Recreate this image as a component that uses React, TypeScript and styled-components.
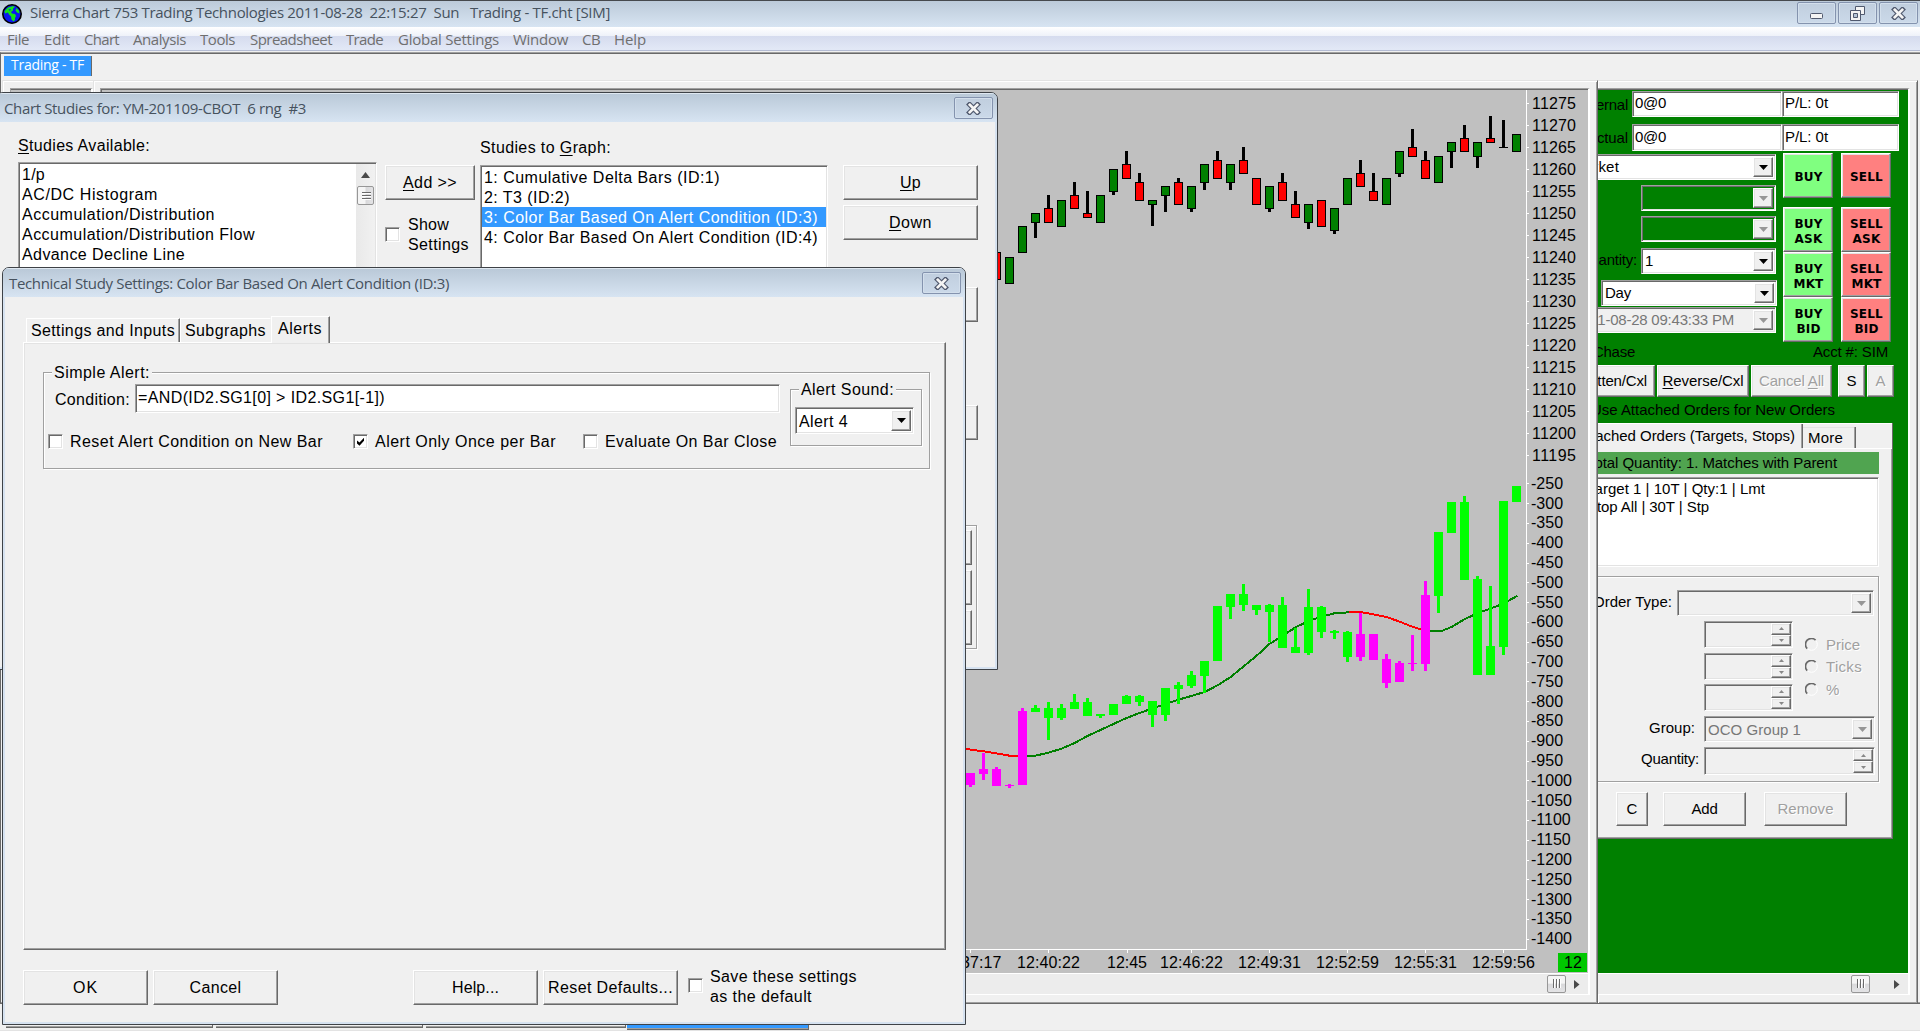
import React, { useLayoutEffect, useRef, useState } from 'react';
import styled, { createGlobalStyle, css } from 'styled-components';

const Global = createGlobalStyle`
  * { box-sizing: border-box; }
  html, body { margin: 0; padding: 0; overflow: hidden; background: #f0f0f0; }
  body { font-family: "Liberation Sans", Arial, sans-serif; font-size: 16px; color: #000; }
`;

const raised = css`
  border: 1px solid;
  border-color: #fff #696969 #696969 #fff;
  box-shadow: inset -1px -1px #a0a0a0, inset 1px 1px #e3e3e3;
`;
const sunken = css`
  border: 1px solid;
  border-color: #a0a0a0 #fff #fff #a0a0a0;
  box-shadow: inset 1px 1px #696969, inset -1px -1px #e3e3e3;
`;

type TextProps = {
  w?: number; size?: number; color?: string; ui?: boolean; bold?: boolean; etched?: boolean;
  children: React.ReactNode;
};
const TextSpan = styled.span<{ $size: number; $color: string; $ui?: boolean; $bold?: boolean; $etched?: boolean }>`
  display: inline-block;
  flex: none;
  align-self: flex-start;
  white-space: pre;
  height: 20px;
  line-height: ${(p) => (p.$ui ? 20 : 22)}px;
  font-size: ${(p) => p.$size}px;
  color: ${(p) => p.$color};
  font-family: ${(p) => (p.$ui ? '"Open Sans", "Noto Sans", sans-serif' : '"Liberation Sans", Arial, sans-serif')};
  font-weight: ${(p) => (p.$bold ? 700 : 400)};
  text-shadow: ${(p) => (p.$etched ? '1px 1px #fff' : 'none')};
  u { text-underline-offset: 2px; text-decoration-thickness: 1px; }
`;

/* Text tracked so that it fills the width it is given. */
function T({ w, size = 16, color = '#000', ui, bold, etched, children }: TextProps) {
  const ref = useRef<HTMLSpanElement>(null);
  const [spacing, setSpacing] = useState(0);
  useLayoutEffect(() => {
    if (ref.current && w) {
      const n = (ref.current.textContent || '').length;
      setSpacing((w - ref.current.getBoundingClientRect().width) / n);
    }
  }, [w]);
  return (
    <TextSpan ref={ref} $size={size} $color={color} $ui={ui} $bold={bold} $etched={etched} style={{ letterSpacing: spacing }}>
      {children}
    </TextSpan>
  );
}

type Box = { $w?: number; $h?: number; $mt?: number; $ml?: number; $mr?: number; $gap?: number };
const box = css<Box>`
  flex: none;
  ${(p) => p.$w !== undefined && `width: ${p.$w}px;`}
  ${(p) => p.$h !== undefined && `height: ${p.$h}px;`}
  margin-top: ${(p) => p.$mt || 0}px;
  margin-left: ${(p) => p.$ml || 0}px;
  margin-right: ${(p) => p.$mr || 0}px;
  gap: ${(p) => p.$gap || 0}px;
`;
const Row = styled.div<Box & { $align?: string }>`
  ${box}
  display: flex;
  align-items: ${(p) => p.$align || 'flex-start'};
`;
const Col = styled.div<Box>`
  ${box}
  display: flex;
  flex-direction: column;
`;
const EndClip = styled.div<Box>`
  ${box}
  display: flex;
  justify-content: flex-end;
  overflow: hidden;
`;
const Button = styled.div<Box>`
  ${box}
  ${raised}
  display: flex;
  align-items: center;
  justify-content: center;
  padding-bottom: 2px;
  background: #f0f0f0;
  & > span { align-self: center; }
`;
const TradeButton = styled.div<Box & { $side: 'buy' | 'sell' }>`
  ${box}
  ${raised}
  width: 50px;
  height: 45px;
  display: flex;
  align-items: center;
  justify-content: center;
  text-align: center;
  background: ${(p) => (p.$side === 'buy' ? '#80ff80' : '#ff8080')};
  font: 700 12px/15px "DejaVu Sans", Verdana, sans-serif;
  letter-spacing: 0.2px;
  padding: 3px 0 0 1px;
  &:not(:first-child) { padding-top: 4px; }
`;
const Field = styled.div<Box & { $bg?: string }>`
  ${box}
  ${sunken}
  background: ${(p) => p.$bg || '#fff'};
  padding: 0 0 4px 2px;
  display: flex;
  align-items: center;
  & > span { align-self: center; }
`;
const ListBox = styled.div<Box>`
  ${box}
  ${sunken}
  background: #fff;
  padding: 1px;
  display: flex;
  overflow: hidden;
`;
const ListItem = styled.div<{ $selected?: boolean; $h: number }>`
  height: ${(p) => p.$h}px;
  padding-left: 2px;
  display: flex;
  align-items: center;
  background: ${(p) => (p.$selected ? '#3399ff' : 'transparent')};
  & > span { align-self: center; }
`;
const Items = styled.div<{ $pl?: number }>`flex: 1; min-width: 0; padding-left: ${(p) => p.$pl || 0}px;`;

const ComboBox = styled.div<Box & { $bg: string }>`
  ${box}
  ${sunken}
  background: ${(p) => p.$bg};
  display: flex;
  align-items: center;
  justify-content: space-between;
  padding: 2px 2px 2px 3px;
`;
const ComboText = styled.div<{ $dy: number }>`
  height: 20px;
  display: flex;
  margin-top: ${(p) => p.$dy}px;
`;
const ComboButton = styled.div`
  ${raised}
  width: 20px;
  align-self: stretch;
  flex: none;
  display: flex;
  align-items: center;
  justify-content: center;
  background: #f0f0f0;
`;
function Combo({ w, h, mt, ml, dy = 0, bg = '#fff', off, children }: { w: number; h: number; mt?: number; ml?: number; dy?: number; bg?: string; off?: boolean; children?: React.ReactNode }) {
  return (
    <ComboBox $w={w} $h={h} $mt={mt} $ml={ml} $bg={bg}>
      <ComboText $dy={dy}>{children}</ComboText>
      <ComboButton>
        <svg width="11" height="7"><path d="M1 1h9L5.5 6z" fill={off ? '#969696' : '#000'} /></svg>
      </ComboButton>
    </ComboBox>
  );
}

const SpinBox = styled.div<Box>`
  ${box}
  ${sunken}
  background: #f0f0f0;
  display: flex;
  justify-content: flex-end;
  padding: 1px;
`;
const SpinButtons = styled.div`width: 20px; display: flex; flex-direction: column;`;
const SpinButton = styled.div`
  ${raised}
  flex: 1;
  display: flex;
  align-items: center;
  justify-content: center;
`;
const Spin = (p: { w: number; h: number; mt?: number }) => (
  <SpinBox $w={p.w} $h={p.h} $mt={p.mt}>
    <SpinButtons>
      <SpinButton><svg width="5" height="3"><path d="M0 3L2.5 0 5 3z" fill="#888" /></svg></SpinButton>
      <SpinButton><svg width="5" height="3"><path d="M0 0h5L2.5 3z" fill="#888" /></svg></SpinButton>
    </SpinButtons>
  </SpinBox>
);

const CheckBox = styled.div<Box>`
  ${box}
  ${sunken}
  width: 15px;
  height: 15px;
  background: #fff;
  display: flex;
  align-items: center;
  justify-content: center;
`;
const Check = ({ on, mt }: { on?: boolean; mt?: number }) => (
  <CheckBox $mt={mt}>
    {on && <svg width="9" height="9"><path d="M1 3.5v3l2.5 2.3L8 3.8V.8L3.5 5.5z" fill="#000" /></svg>}
  </CheckBox>
);
const CheckRow = styled.div<Box>`
  ${box}
  display: flex;
  align-items: center;
  height: 16px;
  & > span { align-self: center; }
`;
const GroupBox = styled.div<Box>`
  ${box}
  border: 1px solid #a0a0a0;
  box-shadow: 1px 1px #fff, inset 1px 1px #fff;
`;
const Legend = styled.div<Box>`
  ${box}
  width: fit-content;
  height: 20px;
  padding: 0 2px;
  display: flex;
  background: #f0f0f0;
`;
const RadioRow = styled.div<Box>`
  ${box}
  display: flex;
  align-items: center;
  gap: 8px;
  height: 20px;
`;
const Radio = () => (
  <svg width="13" height="13" viewBox="0 0 13 13">
    <circle cx="6.5" cy="6.5" r="5.8" fill="#f0f0f0" stroke="#fff" />
    <path d="M2.2 10.6A5.7 5.7 0 0 1 10.6 2.2" fill="none" stroke="#696969" strokeWidth="1.7" />
  </svg>
);

/* ---------- windows ---------- */
const Desktop = styled.div`
  position: relative;
  width: 1920px;
  height: 1032px;
  overflow: hidden;
  background: #f0f0f0;
`;
const AppWindow = styled.div`
  height: 1032px;
  display: flex;
  flex-direction: column;
`;
const AppTitle = styled.div`
  height: 27px;
  flex: none;
  display: flex;
  align-items: center;
  padding: 0 2px;
  border-top: 1px solid #46494d;
  background: linear-gradient(#bccad9, #d7e4f2);
`;
const Spacer = styled.div`flex: 1;`;
const CaptionButton = styled.div<Box>`
  ${box}
  width: 39px;
  height: 22px;
  display: flex;
  align-items: center;
  justify-content: center;
  border: 1px solid #8493ae;
  border-radius: 2px;
  box-shadow: inset 0 0 0 1px #d3dfec;
  background: linear-gradient(#c0cede, #cbd9e9);
`;
const MenuBar = styled.div`
  height: 24px;
  flex: none;
  display: flex;
  align-items: center;
  padding-left: 7px;
  background: linear-gradient(#fff 0, #eef1f9 9px, #d5dbee 9px, #e2e8f6 22px);
  border-bottom: 1px solid #b4bcd4;
`;
const MenuItem = styled.div<{ $w: number }>`
  width: ${(p) => p.$w}px;
  flex: none;
  height: 19px;
`;
const TabStrip = styled.div`
  height: 28px;
  flex: none;
  margin-top: 1px;
  border-top: 1px solid #a0a0a0;
  box-shadow: inset 0 1px #696969;
  padding: 3px 0 0 4px;
  border-left: 1px solid #696969;
`;
const BookTab = styled.div`
  width: 88px;
  height: 20px;
  margin-left: -1px;
  background: #3399ff;
  border-right: 1px solid #696969;
  display: flex;
  padding-left: 7px;
  & > span { margin-top: -1px; }
`;
const Mdi = styled.div`
  height: 924px;
  flex: none;
  display: flex;
  border-left: 1px solid #696969;
  padding-left: 1px;
  box-shadow: inset 0 -1px #696969, inset 0 -2px #a0a0a0;
`;
const Child = styled.div<Box & { $flush?: boolean; $pad: string }>`
  ${box}
  height: 924px;
  border: 1px solid;
  border-color: #e3e3e3 #696969 #696969 #e3e3e3;
  border-left-width: ${(p) => (p.$flush ? 0 : 1)}px;
  box-shadow: inset 1px 1px #fff, inset -1px -1px #a0a0a0;
  padding: ${(p) => p.$pad};
  overflow: hidden;
`;
const ChildStub = styled(Child)`
  border-right-width: 0;
  box-shadow: inset 1px 1px #fff;
`;
const ClientFrame = styled.div<{ $bg: string; $flat?: boolean }>`
  height: 907px;
  border-top: 1px solid #a0a0a0;
  border-right: 2px solid #fff;
  border-bottom: 1px solid #fff;
  border-left: ${(p) => (p.$flat ? '0' : '1px solid #a0a0a0')};
  background: ${(p) => p.$bg};
  overflow: hidden;
`;
const Inner = styled.div<{ $flat?: boolean }>`
  border-top: 1px solid #696969;
  border-left: ${(p) => (p.$flat ? '0' : '1px solid #696969')};
`;
const ScrollBar = styled.div`
  height: 21px;
  display: flex;
  align-items: center;
  justify-content: flex-end;
  background: #ececec;
  border-top: 1px solid #fff;
`;
const HThumb = styled.div<Box>`
  ${box}
  width: 19px;
  height: 18px;
  border: 1px solid #979797;
  border-radius: 2px;
  background: linear-gradient(#f5f5f5 45%, #d9d9db 50%, #e4e4e6);
  display: flex;
  align-items: center;
  justify-content: center;
`;
const VScroll = styled.div`
  width: 19px;
  background: linear-gradient(90deg, #e9e9e9, #f1f1f1);
  display: flex;
  flex-direction: column;
  align-items: center;
  padding-top: 8px;
  gap: 8px;
`;
const VThumb = styled.div`
  width: 17px;
  height: 19px;
  border: 1px solid #979797;
  border-radius: 2px;
  background: linear-gradient(90deg, #f5f5f5 45%, #d9d9db 55%, #e4e4e6);
  display: flex;
  align-items: center;
  justify-content: center;
`;
const StatusTabs = styled.div`
  flex: 1;
  display: flex;
  align-items: flex-start;
  padding: 20px 0 0 6px;
  border-bottom: 1px solid #fff;
  box-shadow: inset 0 -1px #e3e3e3;
`;
const StatusTab = styled.div<{ $w: number; $mr: number; $active?: boolean }>`
  width: ${(p) => p.$w}px;
  height: ${(p) => (p.$active ? 6 : 4)}px;
  margin-right: ${(p) => p.$mr}px;
  background: ${(p) => (p.$active ? '#3399ff' : '#f0f0f0')};
  border-bottom: 1px solid #696969;
  border-right: 1px solid #696969;
  box-shadow: inset 0 -1px #a0a0a0;
`;

const Dialog = styled.div<{ $x: number; $y: number; $w: number; $h: number }>`
  position: absolute;
  left: ${(p) => p.$x}px;
  top: ${(p) => p.$y}px;
  width: ${(p) => p.$w}px;
  height: ${(p) => p.$h}px;
  border: 1px solid #3e4247;
  border-radius: 7px 7px 0 0;
  background: #d6e2f0;
  overflow: hidden;
`;
const DialogTitle = styled.div<{ $pl: number }>`
  height: 29px;
  display: flex;
  align-items: center;
  padding: 0 4px 0 ${(p) => p.$pl}px;
  box-shadow: inset 0 1px #dfe8f1;
  background: linear-gradient(#b9c8d7, #d7e4f2);
`;
const DialogBody = styled.div<{ $h: number }>`
  height: ${(p) => p.$h}px;
  margin: 0 2px;
  background: #f0f0f0;
  overflow: hidden;
`;
const PageTab = styled.div<{ $w: number; $h: number; $active?: boolean; $noRight?: boolean }>`
  width: ${(p) => p.$w}px;
  height: ${(p) => p.$h}px;
  margin-bottom: ${(p) => (p.$active ? -1 : 0)}px;
  position: relative;
  display: flex;
  background: #f0f0f0;
  border: 1px solid #fff;
  border-bottom: 0;
  border-right-color: ${(p) => (p.$noRight ? '#f0f0f0' : '#696969')};
  box-shadow: ${(p) => (p.$noRight ? 'none' : 'inset -1px 0 #a0a0a0')};
  padding-left: ${(p) => (p.$active ? 6 : 4)}px;
  padding-top: 1px;
`;
const Page = styled.div<Box>`
  ${box}
  ${raised}
`;
const TradePanel = styled.div`
  height: 883px;
  background: #008000;
  overflow: hidden;
  display: flex;
  flex-direction: column;
`;
const OrderBook = styled.div`
  height: 416px;
  width: 296px;
  margin-left: -1px;
  margin-top: 4px;
  background: #f0f0f0;
  border-right: 1px solid #696969;
  border-bottom: 1px solid #696969;
  box-shadow: inset -1px -1px #a0a0a0;
  overflow: hidden;
`;
const BookTabs = styled.div`
  height: 25px;
  display: flex;
  background: #f0f0f0;
  border-top: 1px solid #fff;
`;
const BookTabA = styled.div`
  width: 206px;
  border-right: 1px solid #696969;
  box-shadow: inset -1px 0 #a0a0a0;
  display: flex;
  justify-content: flex-end;
  padding: 1px 7px 0 0;
  overflow: hidden;
`;
const BookTabB = styled.div`
  width: 53px;
  margin-top: 3px;
  border-right: 1px solid #696969;
  box-shadow: inset -1px 0 #a0a0a0, inset 0 1px #e3e3e3;
  padding-left: 5px;
  display: flex;
`;
const BookRest = styled.div`flex: 1; border-right: 1px solid #f0f0f0;`;
const Divider = styled.div`height: 1px; background: #fff; margin-left: 206px;`;
const QuantityBand = styled.div`
  width: 282px;
  height: 22px;
  margin-top: 3px;
  background: #50a450;
  display: flex;
  justify-content: flex-end;
  padding: 0 42px 0 0;
  overflow: hidden;
`;

/* ---------- glyphs ---------- */
const CloseGlyph = () => (
  <svg width="15" height="13" viewBox="0 0 15 13">
    <path d="M3.6 2.6L11.4 10.4M11.4 2.6L3.6 10.4" stroke="#50596e" strokeWidth="5" strokeLinecap="square" />
    <path d="M3.8 2.8L11.2 10.2M11.2 2.8L3.8 10.2" stroke="#f4f4f4" strokeWidth="2.7" strokeLinecap="square" />
  </svg>
);
const MinGlyph = () => (
  <svg width="14" height="13"><rect x="0.5" y="6.5" width="12" height="5" rx="1" fill="#f4f4f4" stroke="#50596e" /></svg>
);
const RestoreGlyph = () => (
  <svg width="16" height="15">
    <path d="M5.5.5h9v8h-9z" fill="#f4f4f4" stroke="#50596e" />
    <path d="M.5 4.5h10v10h-10z" fill="#f4f4f4" stroke="#50596e" />
    <path d="M3.5 7.5h4v4h-4z" fill="#b5c4d6" stroke="#50596e" />
  </svg>
);
const Globe = () => (
  <svg width="20" height="20" viewBox="0 0 20 20">
    <circle cx="10" cy="10" r="9.2" fill="#0a18f0" stroke="#000" strokeWidth="1.6" />
    <path d="M2.5 7L6 3.500l5-1.500 2 1-2 1.500 0 2-2 1.500 1 1.500 3 .5 1 2-1 2 0 2-1.500 1.500-2-2-.5-3-2-2-1-2-3 1z" fill="#12e41a" />
    <path d="M14.500 4l2.500 2.500.5 3-2.500-1-1.500-2z" fill="#12e41a" />
    <path d="M6.500 5.500l2.500-.5-1 2z" fill="#0a18f0" />
  </svg>
);
const Grip = ({ v }: { v?: boolean }) => (
  <svg width="10" height="10" viewBox="0 0 10 10" transform={v ? 'rotate(90)' : undefined}>
    <path d="M1.5 0v9M4.5 0v9M7.5 0v9" stroke="#6a6a6a" />
    <path d="M2.5 0v9M5.5 0v9M8.5 0v9" stroke="#fff" />
  </svg>
);
const RightArrow = () => <svg width="6" height="9"><path d="M0 0v9L5.5 4.5z" fill="#4a4a4a" /></svg>;

/* ---------- chart ---------- */
type Bar = [number, number, number, number, string];
const R = '#ff0000', D = '#008000', M = '#ff00ff', G = '#00ff00';
/* body top, body bottom, high, low: thirds of a pixel under the top of each region */
const price: Bar[] = [
  [517, 599, 0, 0, R], [532, 611, 0, 0, D], [439, 518, 0, 0, D], [400, 428, 0, 476, D], [385, 428, 346, 0, R],
  [361, 440, 0, 0, D], [346, 386, 307, 0, R], [400, 413, 334, 0, R], [346, 428, 0, 0, D], [268, 335, 0, 345, D],
  [253, 296, 213, 0, R], [307, 362, 280, 0, R], [361, 374, 0, 438, D], [319, 347, 0, 398, D], [307, 374, 295, 0, R],
  [319, 386, 0, 398, D], [253, 308, 0, 332, D], [241, 296, 213, 0, R], [253, 308, 0, 332, D], [241, 281, 202, 0, R],
  [295, 374, 0, 0, R], [319, 386, 0, 398, D], [307, 362, 280, 0, R], [373, 413, 334, 0, R], [373, 428, 0, 449, D],
  [361, 440, 0, 0, R], [385, 452, 0, 464, D], [295, 374, 0, 0, D], [280, 320, 241, 0, R], [334, 362, 280, 0, R],
  [295, 374, 0, 0, D], [214, 281, 0, 293, D], [202, 230, 148, 0, R], [241, 296, 213, 0, R], [229, 308, 0, 0, D],
  [187, 215, 0, 266, D], [175, 215, 136, 0, R], [187, 230, 0, 266, D], [175, 188, 109, 0, R], [201, 204, 121, 0, '#000'],
  [163, 215, 0, 0, D],
];
const delta: Bar[] = [
  [939, 975, 0, 980, M], [927, 942, 879, 960, M], [927, 978, 921, 0, M], [975, 978, 971, 983, M], [753, 975, 744, 0, M],
  [744, 756, 736, 0, G], [744, 774, 727, 840, G], [744, 774, 733, 780, G], [726, 747, 703, 0, G], [726, 768, 714, 0, G],
  [762, 768, 0, 773, G], [732, 765, 0, 0, G], [708, 732, 705, 0, G], [708, 726, 705, 738, G], [723, 765, 0, 801, G],
  [684, 765, 0, 783, G], [675, 687, 666, 732, G], [645, 678, 633, 683, G], [603, 648, 0, 699, G], [438, 603, 0, 0, G],
  [402, 441, 0, 477, G], [402, 435, 372, 453, G], [435, 450, 0, 465, G], [435, 456, 432, 546, G], [435, 564, 411, 0, G],
  [561, 579, 504, 0, G], [441, 579, 387, 585, G], [441, 516, 438, 534, G], [513, 519, 510, 537, G], [516, 591, 513, 606, G],
  [522, 591, 458, 603, M], [522, 600, 0, 0, M], [597, 669, 582, 684, M], [609, 666, 603, 0, M], [609, 612, 525, 633, M],
  [405, 612, 363, 633, M], [216, 408, 0, 459, G], [126, 219, 0, 0, G], [126, 360, 108, 0, G], [357, 645, 348, 0, G],
  [558, 645, 378, 0, G], [123, 561, 0, 585, G], [78, 126, 0, 0, G],
];
const lines: [string, number[][]][] = [
  [R, [[14, 867], [58, 874], [89, 880], [121, 887], [153, 888]]],
  [D, [[153, 888], [185, 887], [217, 878], [249, 866], [281, 849], [312, 828], [344, 810], [376, 792], [408, 774], [440, 759], [472, 745], [503, 732], [535, 719], [567, 708], [599, 696], [631, 676], [663, 651], [695, 619], [726, 588], [758, 552], [790, 528], [822, 502], [854, 483], [885, 470], [917, 460], [952, 457]]],
  [R, [[952, 456], [981, 456], [1013, 463], [1045, 471], [1077, 485], [1108, 500], [1140, 513]]],
  [D, [[1140, 513], [1180, 513], [1204, 501], [1236, 478], [1268, 459], [1299, 446], [1331, 431], [1366, 407]]],
];
const times: [string, number, number][] = [
  ['12:37:17', 970, 63], ['12:40:22', 1048.5, 63], ['12:45', 1127, 40], ['12:46:22', 1191.5, 63], ['12:49:31', 1269.5, 63],
  ['12:52:59', 1347.5, 63], ['12:55:31', 1425.5, 63], ['12:59:56', 1503.5, 63],
];
const AxisText = styled.text`
  font: 16px "Liberation Sans", Arial, sans-serif;
  fill: #000;
`;
function Chart() {
  return (
    <svg width="1487" height="883" viewBox="102 90 1487 883" shapeRendering="crispEdges" display="block">
      <rect x="102" y="90" width="1487" height="883" fill="#c0c0c0" />
      {lines.map(([c, pts], i) => (
        <polyline key={i} fill="none" stroke={c} strokeWidth="2" points={pts.map(([x, y]) => `${960 + x / 2.45},${460 + y / 3}`).join(' ')} />
      ))}
      {delta.map(([t, b, h, l, c], i) => {
        const x = 966 + 13 * i;
        return (
          <g key={i} fill={c}>
            {(h || l) > 0 && <rect x={x + 3} y={Math.round(460 + (h || t) / 3)} width="3" height={Math.round(((l || b) - (h || t)) / 3)} />}
            <rect x={x} y={Math.round(460 + t / 3)} width="9" height={Math.round((b - t) / 3)} />
          </g>
        );
      })}
      {price.map(([t, b, h, l, c], i) => {
        const x = 992 + 13 * i;
        const top = Math.round(80 + t / 3), bot = Math.round(80 + b / 3);
        return (
          <g key={i}>
            {(h || l) > 0 && <rect x={x + 3} y={Math.round(80 + (h || t) / 3)} width="3" height={Math.round(((l || b) - (h || t)) / 3)} />}
            <rect x={x} y={top} width="9" height={bot - top} />
            {bot - top > 2 && <rect x={x + 1} y={top + 1} width="7" height={bot - top - 2} fill={c} />}
          </g>
        );
      })}
      <path d="M1526.5 90V949.5H102" fill="none" stroke="#fff" />
      {Array.from({ length: 17 }, (_, i) => (
        <g key={i}>
          <rect x="1527" y={103 + 22 * i} width="2" height="1" fill="#fff" />
          <AxisText x="1532" y={109 + 22 * i} textLength="44">{11275 - 5 * i}</AxisText>
        </g>
      ))}
      {Array.from({ length: 24 }, (_, i) => (
        <g key={i}>
          <rect x="1527" y={Math.round(483.3 + 19.8 * i)} width="2" height="1" fill="#fff" />
          <AxisText x="1531" y={Math.round(488.7 + 19.8 * i)}>{-250 - 50 * i}</AxisText>
        </g>
      ))}
      {times.map(([s, x, w]) => (
        <g key={s}>
          <rect x={Math.floor(x)} y="950" width="1" height="3" fill="#fff" />
          <AxisText x={x - w / 2} y="968" textLength={w}>{s}</AxisText>
        </g>
      ))}
      <rect x="1558" y="953" width="29" height="19" fill="#00c800" />
      <AxisText x="1564" y="968">12</AxisText>
    </svg>
  );
}

const menu: [string, number, number][] = [
  ['File', 37, 22], ['Edit', 40, 26], ['Chart', 49, 35], ['Analysis', 67, 53], ['Tools', 50, 35], ['Spreadsheet', 96, 82],
  ['Trade', 52, 37], ['Global Settings', 115, 101], ['Window', 69, 55], ['CB', 32, 18], ['Help', 60, 32],
];
const available: [string, number][] = [
  ['1/p', 23], ['AC/DC Histogram', 136], ['Accumulation/Distribution', 193], ['Accumulation/Distribution Flow', 233], ['Advance Decline Line', 163],
];
const graphed: [string, number][] = [
  ['1: Cumulative Delta Bars (ID:1)', 236], ['2: T3 (ID:2)', 86],
  ['3: Color Bar Based On Alert Condition (ID:3)', 334], ['4: Color Bar Based On Alert Condition (ID:4)', 334],
];

function TradeWindow() {
  return (
    <TradePanel>
      <Row $h={26} $mt={1}>
        <EndClip $w={30} $mr={4} $mt={3}><T size={15} w={48}>Internal</T></EndClip>
        <Field $w={150} $h={26}><T size={15} w={31}>0@0</T></Field>
        <Field $w={117} $h={26}><T size={15} w={43}>P/L: 0t</T></Field>
      </Row>
      <Row $h={27} $mt={7}>
        <EndClip $w={30} $mr={4} $mt={3}><T size={15} w={41}>Actual</T></EndClip>
        <Field $w={150} $h={27}><T size={15} w={31}>0@0</T></Field>
        <Field $w={117} $h={27}><T size={15} w={43}>P/L: 0t</T></Field>
      </Row>
      <Row $h={190} $mt={2}>
        <Col $w={185}>
          <Combo w={208} h={26} ml={-30} mt={1} dy={-3}><T size={15} w={47}>Market</T></Combo>
          <Combo w={135} h={26} ml={43} mt={5} bg="#008000" off />
          <Combo w={135} h={26} ml={43} mt={5} bg="#008000" off />
          <Row $mt={6}>
            <EndClip $w={39} $mr={4} $mt={1}><T size={15} w={58}>Quantity:</T></EndClip>
            <Combo w={135} h={26} dy={-2}><T size={15}>1</T></Combo>
          </Row>
          <Combo w={176} h={26} ml={3} mt={6} dy={-2}><T size={15} w={26}>Day</T></Combo>
          <Row $h={26} $mt={1}>
            <Combo w={206} h={26} ml={-28} bg="#f0f0f0" off dy={-2}><T size={15} w={160} color="#777">2011-08-28 09:43:33 PM</T></Combo>
          </Row>
        </Col>
        <Col $w={58}>
          <TradeButton $side="buy">BUY</TradeButton>
          <TradeButton $side="buy" $mt={9}>BUY<br />ASK</TradeButton>
          <TradeButton $side="buy">BUY<br />MKT</TradeButton>
          <TradeButton $side="buy">BUY<br />BID</TradeButton>
        </Col>
        <Col>
          <TradeButton $side="sell">SELL</TradeButton>
          <TradeButton $side="sell" $mt={9}>SELL<br />ASK</TradeButton>
          <TradeButton $side="sell">SELL<br />MKT</TradeButton>
          <TradeButton $side="sell">SELL<br />BID</TradeButton>
        </Col>
      </Row>
      <Row $h={20} $mt={-2}>
        <EndClip $w={37}><T size={15} w={42}>Chase</T></EndClip>
        <Spacer />
        <T size={15} w={75}>Acct #: SIM</T>
        <Row $w={20} />
      </Row>
      <Row $h={32} $mt={4}>
        <EndClip $w={57}><Button $w={86} $h={32}><T size={15} w={70}>Flatten/Cxl</T></Button></EndClip>
        <Button $w={92} $h={32} $ml={2}><T size={15} w={81}><u>R</u>everse/Cxl</T></Button>
        <Button $w={81} $h={32} $ml={2}><T size={15} w={65} color="#a0a0a0" etched>Cancel <u>A</u>ll</T></Button>
        <Button $w={27} $h={32} $ml={6}><T size={15}>S</T></Button>
        <Button $w={27} $h={32} $ml={2}><T size={15} color="#a0a0a0" etched>A</T></Button>
      </Row>
      <EndClip $w={237} $h={20} $mt={2}><T size={15} w={244}>Use Attached Orders for New Orders</T></EndClip>
      <OrderBook>
        <BookTabs>
          <BookTabA><T size={15} w={218}>Attached Orders (Targets, Stops)</T></BookTabA>
          <BookTabB><T size={15} w={35}>More</T></BookTabB>
          <BookRest />
        </BookTabs>
        <Divider />
        <QuantityBand><T size={15} w={250}>Total Quantity: 1. Matches with Parent</T></QuantityBand>
        <ListBox $w={300} $h={90} $ml={-18} $mt={3}>
          <Items $pl={4}>
            <ListItem $h={18}><T w={178} size={15}>Target 1 | 10T | Qty:1 | Lmt</T></ListItem>
            <ListItem $h={18}><T w={122} size={15}>Stop All | 30T | Stp</T></ListItem>
          </Items>
        </ListBox>
        <GroupBox $w={300} $h={206} $ml={-18} $mt={9}>
          <Row $mt={13} $h={26} $ml={17}>
            <EndClip $w={75} $mr={5} $mt={1}><T size={15} w={79}>Order Type:</T></EndClip>
            <Combo w={197} h={26} bg="#f0f0f0" off />
          </Row>
          <Row $mt={5} $ml={124}>
            <Col $w={101}>
              <Spin w={89} h={27} />
              <Spin w={89} h={27} mt={5} />
              <Spin w={89} h={27} mt={4} />
            </Col>
            <Col>
              <RadioRow $mt={13}><Radio /><T size={15} w={34} color="#a0a0a0" etched>Price</T></RadioRow>
              <RadioRow $mt={2}><Radio /><T size={15} w={36} color="#a0a0a0" etched>Ticks</T></RadioRow>
              <RadioRow $mt={3}><Radio /><T size={15} w={13} color="#a0a0a0" etched>%</T></RadioRow>
            </Col>
          </Row>
          <Row $mt={5} $h={26} $ml={17}>
            <EndClip $w={98} $mr={9} $mt={1}><T size={15} w={46}>Group:</T></EndClip>
            <Combo w={171} h={26} bg="#f0f0f0" off><T size={15} w={93} color="#777">OCO Group 1</T></Combo>
          </Row>
          <Row $mt={5} $h={28} $ml={17}>
            <EndClip $w={102} $mr={5} $mt={1}><T size={15} w={58}>Quantity:</T></EndClip>
            <Spin w={171} h={28} />
          </Row>
        </GroupBox>
        <Row $mt={10} $ml={19}>
          <Button $w={32} $h={34}><T size={15}>C</T></Button>
          <Button $w={83} $h={34} $ml={15}><T size={15} w={26}>Add</T></Button>
          <Button $w={83} $h={34} $ml={18}><T size={15} w={56} color="#a0a0a0" etched>Remove</T></Button>
        </Row>
      </OrderBook>
    </TradePanel>
  );
}

export default function App() {
  return (
    <Desktop>
      <Global />
      <AppWindow>
        <AppTitle>
          <Globe />
          <Row $ml={8} $mt={-5}><T ui w={580} size={15} color="#46525e">Sierra Chart 753 Trading Technologies 2011-08-28  22:15:27  Sun   Trading - TF.cht [SIM]</T></Row>
          <Spacer />
          <Row $gap={2} $mt={-2}>
            <CaptionButton><MinGlyph /></CaptionButton>
            <CaptionButton><RestoreGlyph /></CaptionButton>
            <CaptionButton><CloseGlyph /></CaptionButton>
          </Row>
        </AppTitle>
        <MenuBar>
          {menu.map(([s, cell, w]) => (
            <MenuItem key={s} $w={cell}><T ui w={w} size={15} color="#6f6f6f">{s}</T></MenuItem>
          ))}
        </MenuBar>
        <TabStrip>
          <BookTab><T ui w={73} size={14} color="#fff">Trading - TF</T></BookTab>
        </TabStrip>
        <Mdi>
          <ChildStub $w={91} $pad="7px 0 0 7px"><ClientFrame $bg="#c0c0c0"><Inner /></ClientFrame></ChildStub>
          <Child $w={1505} $pad="7px 7px 0 6px">
            <ClientFrame $bg="#f0f0f0">
              <Inner><Chart /></Inner>
              <ScrollBar><HThumb $mr={8}><Grip /></HThumb><RightArrow /><Row $w={8} /></ScrollBar>
            </ClientFrame>
          </Child>
          <Child $w={320} $flush $pad="7px 7px 0 0">
            <ClientFrame $bg="#f0f0f0" $flat>
              <Inner $flat><TradeWindow /></Inner>
              <ScrollBar><HThumb $mr={24}><Grip /></HThumb><RightArrow /><Row $w={8} /></ScrollBar>
            </ClientFrame>
          </Child>
        </Mdi>
        <StatusTabs>
          <StatusTab $w={207} $mr={3} />
          <StatusTab $w={207} $mr={3} />
          <StatusTab $w={200} $mr={1} />
          <StatusTab $w={182} $mr={0} $active />
        </StatusTabs>
      </AppWindow>

      <Dialog $x={-4} $y={92} $w={1002} $h={578}>
        <DialogTitle $pl={7}>
          <Row><T ui w={302} size={15} color="#46525e">Chart Studies for: YM-201109-CBOT  6 rng  #3</T></Row>
          <Spacer />
          <CaptionButton $mt={1}><CloseGlyph /></CaptionButton>
        </DialogTitle>
        <DialogBody $h={545}>
          <Row $ml={19}>
            <Col $w={359} $mt={13}>
              <T w={132}><u>S</u>tudies Available:</T>
              <ListBox $w={359} $h={220} $mt={7}>
                <Items>{available.map(([s, w]) => <ListItem key={s} $h={20}><T w={w}>{s}</T></ListItem>)}</Items>
                <VScroll>
                  <svg width="9" height="6"><path d="M0 6L4.5 0 9 6z" fill="#4a4a4a" /></svg>
                  <VThumb><Grip v /></VThumb>
                </VScroll>
              </ListBox>
            </Col>
            <Col $w={90} $ml={8} $mt={43}>
              <Button $w={90} $h={35}><T w={54}><u>A</u>dd &gt;&gt;</T></Button>
              <Row $mt={14}>
                <Check mt={13} />
                <Col $ml={8}>
                  <T w={41}>Show</T>
                  <T w={61}>Settings</T>
                </Col>
              </Row>
            </Col>
            <Col $w={348} $ml={5} $mt={15}>
              <T w={131}>Studies to <u>G</u>raph:</T>
              <ListBox $w={348} $h={220} $mt={8}>
                <Items>
                  {graphed.map(([s, w], i) => (
                    <ListItem key={s} $h={20} $selected={i === 2}><T w={w} color={i === 2 ? '#fff' : '#000'}>{s}</T></ListItem>
                  ))}
                </Items>
              </ListBox>
            </Col>
            <Col $w={135} $ml={15} $mt={43}>
              <Button $w={135} $h={35}><T w={21}><u>U</u>p</T></Button>
              <Button $w={135} $h={35} $mt={5}><T w={43}><u>D</u>own</T></Button>
              <Button $w={135} $h={35} $mt={47} />
              <Button $w={135} $h={35} $mt={83} />
              <GroupBox $w={134} $h={124} $mt={85}>
                <Button $w={128} $h={35} $mt={4} />
                <Button $w={128} $h={35} $mt={5} />
                <Button $w={128} $h={35} $mt={5} />
              </GroupBox>
            </Col>
          </Row>
        </DialogBody>
      </Dialog>

      <Dialog $x={2} $y={267} $w={964} $h={758}>
        <DialogTitle $pl={6}>
          <Row><T ui w={440} size={15} color="#46525e">Technical Study Settings: Color Bar Based On Alert Condition (ID:3)</T></Row>
          <Spacer />
          <CaptionButton $mt={1}><CloseGlyph /></CaptionButton>
        </DialogTitle>
        <DialogBody $h={725}>
          <Row $ml={21} $mt={19} $h={26} $align="flex-end">
            <PageTab $w={154} $h={24}><T w={144}>Settings and Inputs</T></PageTab>
            <PageTab $w={91} $h={24} $noRight><T w={81}>Subgraphs</T></PageTab>
            <PageTab $w={59} $h={27} $active><T w={44}>Alerts</T></PageTab>
          </Row>
          <Page $w={923} $h={608} $ml={18}>
            <GroupBox $w={887} $h={97} $mt={29} $ml={19}>
              <Legend $ml={8} $mt={-11}><T w={96}>Simple Alert:</T></Legend>
              <Row>
                <Col $w={736}>
                  <Row $h={29} $mt={2} $ml={11} $align="center">
                    <Row $w={80} $mt={1}><T w={75}>Condition:</T></Row>
                    <Field $w={645} $h={29}><T w={247}>=AND(ID2.SG1[0] &gt; ID2.SG1[-1])</T></Field>
                  </Row>
                  <Row $h={16} $mt={20} $ml={4} $align="center">
                    <CheckRow $w={305} $gap={7}><Check /><T w={253}>Reset Alert Condition on New Bar</T></CheckRow>
                    <CheckRow $w={230} $gap={7}><Check on /><T w={181}>Alert Only Once per Bar</T></CheckRow>
                    <CheckRow $gap={7}><Check /><T w={172}>Evaluate On Bar Close</T></CheckRow>
                  </Row>
                </Col>
                <GroupBox $w={132} $h={57} $mt={7} $ml={10}>
                  <Legend $ml={8} $mt={-11}><T w={93}>Alert Sound:</T></Legend>
                  <Combo w={119} h={27} ml={4} mt={8} dy={1}><T w={49}>Alert 4</T></Combo>
                </GroupBox>
              </Row>
            </GroupBox>
          </Page>
          <Row $mt={20} $ml={18} $gap={5}>
            <Button $w={125} $h={35}><T w={25}>OK</T></Button>
            <Button $w={125} $h={35}><T w={52}>Cancel</T></Button>
            <Button $w={125} $h={35} $ml={130}><T w={47}>Help...</T></Button>
            <Button $w={135} $h={35}><T w={125}>Reset Defaults...</T></Button>
            <Row $ml={5} $mt={-4}>
              <Check mt={12} />
              <Col $ml={7}>
                <T w={147}>Save these settings</T>
                <T w={102}>as the default</T>
              </Col>
            </Row>
          </Row>
        </DialogBody>
      </Dialog>
    </Desktop>
  );
}
